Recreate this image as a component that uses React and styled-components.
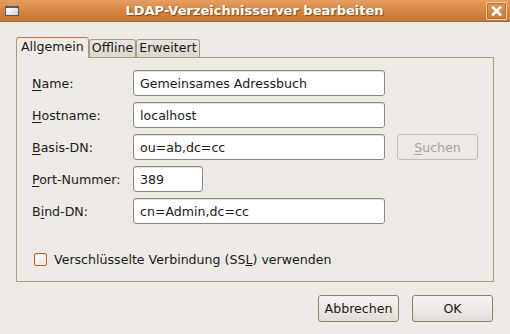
import React, { useState } from "react";
import styled, { createGlobalStyle } from "styled-components";

const GlobalStyle = createGlobalStyle`
  html, body {
    margin: 0;
    padding: 0;
    background: #edeae5;
  }
  body {
    font-family: "DejaVu Sans", "Liberation Sans", sans-serif;
    font-size: 12.6px;
    color: #1a1a1a;
  }
`;

const Window = styled.div`
  width: 510px;
  height: 334px;
  display: flex;
  flex-direction: column;
  background: #edeae5;
  overflow: hidden;
`;

const TitleBar = styled.div`
  height: 22px;
  display: flex;
  align-items: center;
  padding: 0 3px 0 5px;
  background: linear-gradient(#e59f62, #d4843f 55%, #c97835);
  border-bottom: 1px solid #a9662c;
  box-sizing: border-box;
`;

const WinIcon = styled.div`
  width: 14px;
  height: 10px;
  margin-top: 1px;
  border: 1px solid #5a5a5a;
  border-top-width: 2px;
  background: linear-gradient(135deg, #ffffff, #cfd3d8);
  box-sizing: border-box;
`;

const Title = styled.div`
  flex: 1;
  text-align: center;
  color: #ffffff;
  font-weight: bold;
  font-size: 13px;
  text-shadow: 1px 1px 1px #7a4a1e;
  padding-left: 4px;
`;

const CloseButton = styled.div`
  width: 21px;
  height: 18px;
  border: 1px solid #f3d2b2;
  border-radius: 2px;
  box-sizing: border-box;
  display: flex;
  align-items: center;
  justify-content: center;
  background: linear-gradient(#dd9656, #cc7c3b);
  box-shadow: inset 0 0 0 1px #b8702f;
`;

const Content = styled.div`
  flex: 1;
  display: flex;
  flex-direction: column;
  padding: 14px 16px 0 16px;
`;

const TabStrip = styled.div`
  display: flex;
  align-items: flex-end;
  height: 21px;
`;

const Tab = styled.div`
  height: ${(p) => (p.$active ? "21px" : "18px")};
  padding: 0 ${(p) => (p.$active ? "4px" : "2px")};
  box-sizing: border-box;
  border: 1px solid #a49a8c;
  border-bottom: none;
  border-top-color: ${(p) => (p.$active ? "#c0763a" : "#a49a8c")};
  border-radius: 3px 3px 0 0;
  background: ${(p) =>
    p.$active ? "#eeebe6" : "linear-gradient(#e9e5df, #dcd6ce)"};
  display: flex;
  align-items: center;
  line-height: 1;
  margin-bottom: ${(p) => (p.$active ? "-1px" : "0")};
  position: relative;
  z-index: ${(p) => (p.$active ? 1 : 0)};
  padding-bottom: ${(p) => (p.$active ? "1px" : "0")};
`;

const Panel = styled.div`
  width: 478px;
  height: 225px;
  box-sizing: border-box;
  border: 1px solid #a49a8c;
  padding: 12px 15px 0 15px;
  display: flex;
  flex-direction: column;
`;

const FormGrid = styled.div`
  display: grid;
  grid-template-columns: 89px 252px 81px;
  column-gap: 12px;
  row-gap: 6px;
  align-items: center;
`;

const Label = styled.label`
  white-space: nowrap;
  & u {
    text-decoration: underline;
    text-underline-offset: 2px;
  }
`;

const Input = styled.input`
  grid-column: 2;
  width: ${(p) => p.$width || "252px"};
  height: 26px;
  box-sizing: border-box;
  border: 1px solid #8f877b;
  border-radius: 3px;
  background: #ffffff;
  box-shadow: inset 0 1px 0 #e2ded8;
  padding: 0 6px;
  font-family: "DejaVu Sans", "Liberation Sans", sans-serif;
  font-size: 12.6px;
  color: #1a1a1a;
  outline: none;
`;

const Button = styled.button`
  height: ${(p) => p.$height || "26px"};
  width: 81px;
  box-sizing: border-box;
  border: 1px solid ${(p) => (p.disabled ? "#c4bdb3" : "#8a8070")};
  border-radius: 3px;
  background: ${(p) =>
    p.disabled ? "#ece9e4" : "linear-gradient(#f6f4f1, #ebe8e3 60%, #dfdbd5)"};
  color: ${(p) => (p.disabled ? "#a9a39a" : "#1a1a1a")};
  font-family: "DejaVu Sans", "Liberation Sans", sans-serif;
  font-size: 12.6px;
  padding: 0;
  cursor: pointer;
  & u {
    text-underline-offset: 2px;
  }
`;

const CheckRow = styled.label`
  display: flex;
  align-items: center;
  gap: 7px;
  margin-top: 28px;
  padding-left: 2px;
`;

const CheckBox = styled.span`
  width: 13px;
  height: 13px;
  box-sizing: border-box;
  border: 1px solid #b5652a;
  border-radius: 2px;
  background: linear-gradient(135deg, #ffffff, #e6e2dc);
  box-shadow: inset 0 0 0 1px #f4ede6;
`;

const ButtonBar = styled.div`
  display: flex;
  justify-content: flex-end;
  gap: 13px;
  padding: 13px 1px 0 0;
`;

const App = () => {
  const [form, setForm] = useState({
    name: "Gemeinsames Adressbuch",
    host: "localhost",
    base: "ou=ab,dc=cc",
    port: "389",
    bind: "cn=Admin,dc=cc",
  });

  const onChange = (event) => {
    setForm({ ...form, [event.target.name]: event.target.value });
  };

  return (
    <Window>
      <GlobalStyle />
      <TitleBar>
        <WinIcon />
        <Title>LDAP-Verzeichnisserver bearbeiten</Title>
        <CloseButton>
          <svg width="11" height="10" viewBox="0 0 11 10">
            <path
              d="M2 1.5 L9 8.5 M9 1.5 L2 8.5"
              stroke="#ffffff"
              strokeWidth="2.6"
              strokeLinecap="square"
            />
          </svg>
        </CloseButton>
      </TitleBar>
      <Content>
        <TabStrip>
          <Tab $active>Allgemein</Tab>
          <Tab>Offline</Tab>
          <Tab>Erweitert</Tab>
        </TabStrip>
        <Panel>
          <FormGrid>
            <Label>
              <u>N</u>ame:
            </Label>
            <Input name="name" value={form.name} onChange={onChange} />
            <span />
            <Label>
              <u>H</u>ostname:
            </Label>
            <Input name="host" value={form.host} onChange={onChange} />
            <span />
            <Label>
              <u>B</u>asis-DN:
            </Label>
            <Input name="base" value={form.base} onChange={onChange} />
            <Button disabled>
              <u>S</u>uchen
            </Button>
            <Label>
              <u>P</u>ort-Nummer:
            </Label>
            <Input
              name="port"
              $width="70px"
              value={form.port}
              onChange={onChange}
            />
            <span />
            <Label>
              B<u>i</u>nd-DN:
            </Label>
            <Input name="bind" value={form.bind} onChange={onChange} />
            <span />
          </FormGrid>
          <CheckRow>
            <CheckBox />
            <span>
              Verschlüsselte Verbindung (SS<u>L</u>) verwenden
            </span>
          </CheckRow>
        </Panel>
        <ButtonBar>
          <Button $height="27px">Abbrechen</Button>
          <Button $height="27px">OK</Button>
        </ButtonBar>
      </Content>
    </Window>
  );
};

export default App;
